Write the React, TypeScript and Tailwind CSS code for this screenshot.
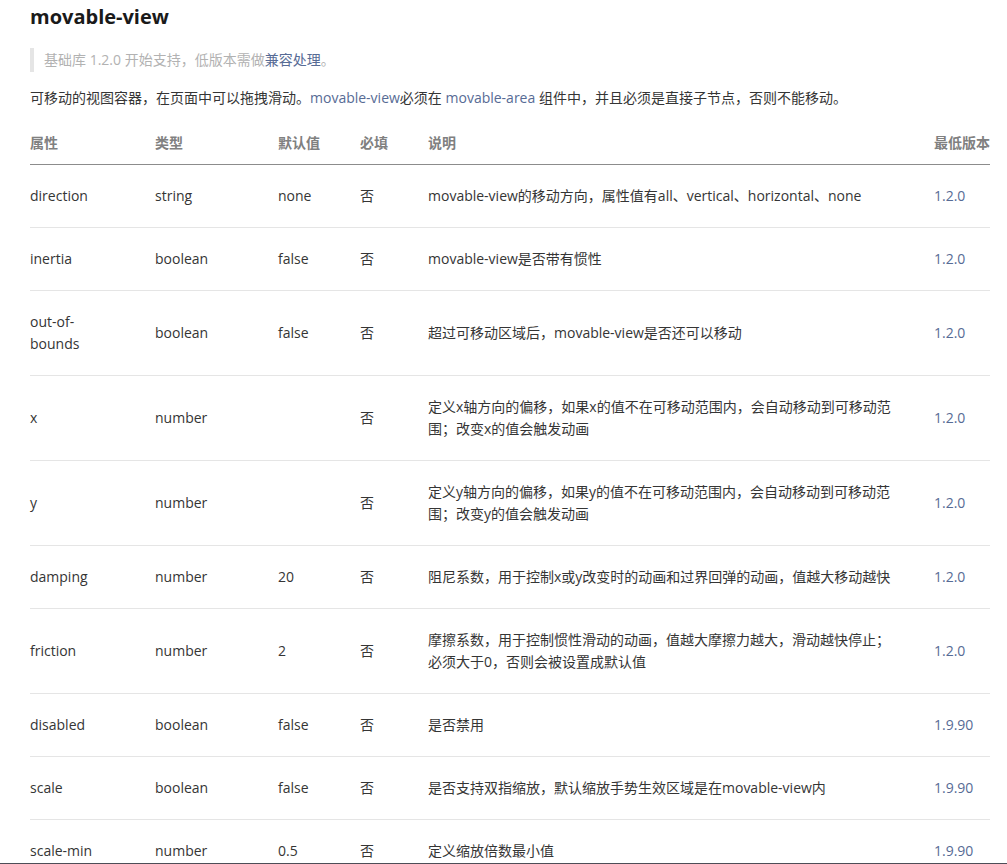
import React from "react";

type Row = {
  name: React.ReactNode;
  type: string;
  def: string;
  req: string;
  desc: React.ReactNode;
  ver: string;
};

const rows: Row[] = [
  { name: "direction", type: "string", def: "none", req: "否", desc: "movable-view的移动方向，属性值有all、vertical、horizontal、none", ver: "1.2.0" },
  { name: "inertia", type: "boolean", def: "false", req: "否", desc: "movable-view是否带有惯性", ver: "1.2.0" },
  { name: (<>out-of-<br />bounds</>), type: "boolean", def: "false", req: "否", desc: "超过可移动区域后，movable-view是否还可以移动", ver: "1.2.0" },
  { name: "x", type: "number", def: "", req: "否", desc: (<>定义x轴方向的偏移，如果x的值不在可移动范围内，会自动移动到可移动范<br />围；改变x的值会触发动画</>), ver: "1.2.0" },
  { name: "y", type: "number", def: "", req: "否", desc: (<>定义y轴方向的偏移，如果y的值不在可移动范围内，会自动移动到可移动范<br />围；改变y的值会触发动画</>), ver: "1.2.0" },
  { name: "damping", type: "number", def: "20", req: "否", desc: "阻尼系数，用于控制x或y改变时的动画和过界回弹的动画，值越大移动越快", ver: "1.2.0" },
  { name: "friction", type: "number", def: "2", req: "否", desc: (<>摩擦系数，用于控制惯性滑动的动画，值越大摩擦力越大，滑动越快停止；<br />必须大于0，否则会被设置成默认值</>), ver: "1.2.0" },
  { name: "disabled", type: "boolean", def: "false", req: "否", desc: "是否禁用", ver: "1.9.90" },
  { name: "scale", type: "boolean", def: "false", req: "否", desc: "是否支持双指缩放，默认缩放手势生效区域是在movable-view内", ver: "1.9.90" },
  { name: "scale-min", type: "number", def: "0.5", req: "否", desc: "定义缩放倍数最小值", ver: "1.9.90" },
];

export default function App() {
  return (
    <div
      className="h-[864px] w-[1007px] flex flex-col overflow-hidden bg-white text-[14px] leading-[22px] text-[#353535]"
      style={{ fontFamily: '"Open Sans", "Noto Sans CJK SC", sans-serif' }}
    >
      <div className="flex-1 overflow-hidden pl-[30px] pt-[3px]">
        <h1 className="text-[20px] leading-[28px] font-bold text-[#1a1a1a]">movable-view</h1>
        <div className="mt-[17px] flex items-stretch">
          <div className="w-[4px] bg-[#e5e5e5]" />
          <p className="pl-[10px] py-[1px] text-[#b2b2b2]">
            基础库 1.2.0 开始支持，低版本需做<span className="text-[#576b95]">兼容处理</span>。
          </p>
        </div>
        <p className="mt-[15px]">
          可移动的视图容器，在页面中可以拖拽滑动。<span className="text-[#576b95]">movable-view</span>必须在{" "}
          <span className="text-[#576b95]">movable-area</span> 组件中，并且必须是直接子节点，否则不能移动。
        </p>
        <table className="mt-[23px] w-[960px] table-fixed border-collapse">
          <colgroup>
            <col className="w-[125px]" />
            <col className="w-[123px]" />
            <col className="w-[82px]" />
            <col className="w-[68px]" />
            <col className="w-[506px]" />
            <col className="w-[56px]" />
          </colgroup>
          <thead>
            <tr className="border-b border-[#8c8c8c] text-left font-bold text-[#808080]">
              <th className="pb-[10px] font-bold">属性</th>
              <th className="pb-[10px] font-bold">类型</th>
              <th className="pb-[10px] font-bold">默认值</th>
              <th className="pb-[10px] font-bold">必填</th>
              <th className="pb-[10px] font-bold">说明</th>
              <th className="pb-[10px] font-bold whitespace-nowrap">最低版本</th>
            </tr>
          </thead>
          <tbody>
            {rows.map((r, i) => (
              <tr key={i} className="border-b border-[#e5e5e5] align-middle">
                <td className="py-[20px] pr-[20px]">{r.name}</td>
                <td className="py-[20px]">{r.type}</td>
                <td className="py-[20px]">{r.def}</td>
                <td className="py-[20px]">{r.req}</td>
                <td className="py-[20px] whitespace-nowrap">{r.desc}</td>
                <td className="py-[20px] text-[#576b95] whitespace-nowrap">{r.ver}</td>
              </tr>
            ))}
          </tbody>
        </table>
      </div>
      <div className="h-px bg-[#4d4d57]" />
    </div>
  );
}
